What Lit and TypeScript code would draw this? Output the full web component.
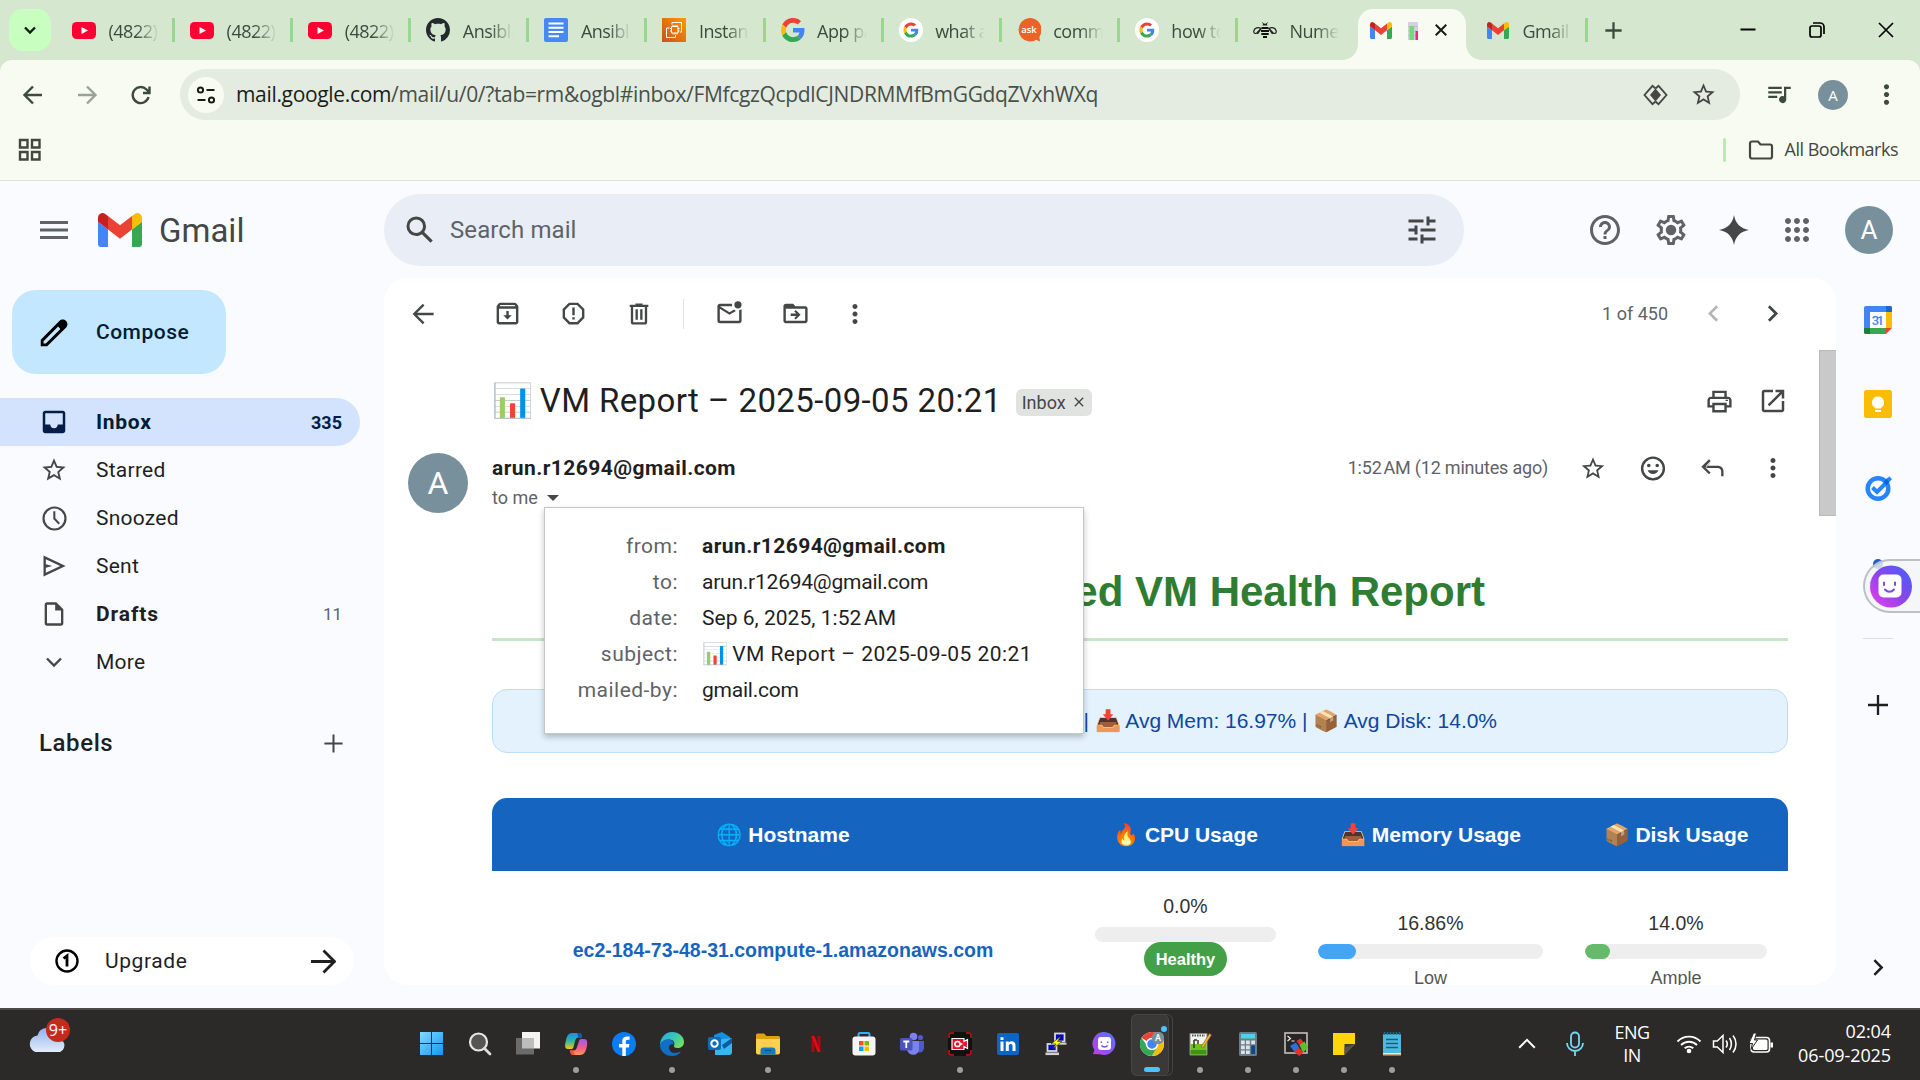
import { LitElement, html, svg, css, nothing, type TemplateResult, type SVGTemplateResult } from "lit";
import { customElement } from "lit/decorators.js";
import { classMap } from "lit/directives/class-map.js";

const BAR_CHART = "\u{1F4CA}";
const INBOX_TRAY = "\u{1F4E5}";
const PACKAGE = "\u{1F4E6}";
const FIRE = "\u{1F525}";
const GLOBE = "\u{1F310}";

/** Filled glyph on the 24-unit icon grid. */
const fill = (d: string, size = 30, cls = "") =>
  html`<svg class=${cls} width=${size} height=${size} viewBox="0 0 24 24" fill="currentColor"><path fill-rule="evenodd" d=${d} /></svg>`;

/** Outlined glyph on the 24-unit icon grid. */
const line = (d: string, size = 30, w = 2, cls = "") =>
  html`<svg class=${cls} width=${size} height=${size} viewBox="0 0 24 24" fill="none" stroke="currentColor" stroke-width=${w}><path d=${d} /></svg>`;

const art = (w: number, h: number, box: string, body: SVGTemplateResult) =>
  html`<svg width=${w} height=${h} viewBox=${box} preserveAspectRatio="none">${body}</svg>`;

const P = {
  star: "M22 9.24l-7.19-.62L12 2 9.19 8.63 2 9.24l5.46 4.73L5.82 21 12 17.27 18.18 21l-1.63-7.03L22 9.24zM12 15.4l-3.76 2.27 1-4.28-3.32-2.88 4.38-.38L12 6.1l1.71 4.04 4.38.38-3.32 2.88 1 4.28L12 15.4z",
  dots: "M12 8c1.1 0 2-.9 2-2s-.9-2-2-2-2 .9-2 2 .9 2 2 2zm0 2c-1.1 0-2 .9-2 2s.9 2 2 2 2-.9 2-2-.9-2-2-2zm0 6c-1.1 0-2 .9-2 2s.9 2 2 2 2-.9 2-2-.9-2-2-2z",
  search: "M20.49 19l-5.73-5.73C15.53 12.2 16 10.91 16 9.5A6.5 6.5 0 1 0 9.5 16c1.41 0 2.7-.47 3.77-1.24L19 20.49 20.49 19zM5 9.5C5 7.01 7.01 5 9.5 5S14 7.01 14 9.5 11.99 14 9.5 14 5 11.99 5 9.5z",
  tune: "M3 17v2h6v-2H3zM3 5v2h10V5H3zm10 16v-2h8v-2h-8v-2h-2v6h2zM7 9v2H3v2h4v2h2V9H7zm14 4v-2H11v2h10zm-6-4h2V7h4V5h-4V3h-2v6z",
  help: "M11 18h2v-2h-2v2zm1-16C6.48 2 2 6.48 2 12s4.48 10 10 10 10-4.48 10-10S17.52 2 12 2zm0 18c-4.41 0-8-3.59-8-8s3.59-8 8-8 8 3.59 8 8-3.59 8-8 8zm0-14c-2.21 0-4 1.79-4 4h2c0-1.1.9-2 2-2s2 .9 2 2c0 2-3 1.75-3 5h2c0-2.25 3-2.5 3-5 0-2.21-1.79-4-4-4z",
  gear: "M19.43 12.98c.04-.32.07-.64.07-.98 0-.34-.03-.66-.07-.98l2.11-1.65c.19-.15.24-.42.12-.64l-2-3.46c-.09-.16-.26-.25-.44-.25-.06 0-.12.01-.17.03l-2.49 1c-.52-.4-1.08-.73-1.69-.98l-.38-2.65C14.46 2.18 14.25 2 14 2h-4c-.25 0-.46.18-.49.42l-.38 2.65c-.61.25-1.17.59-1.69.98l-2.49-1c-.06-.02-.12-.03-.18-.03-.17 0-.34.09-.43.25l-2 3.46c-.13.22-.07.49.12.64l2.11 1.65c-.04.32-.07.65-.07.98 0 .33.03.66.07.98l-2.11 1.65c-.19.15-.24.42-.12.64l2 3.46c.09.16.26.25.44.25.06 0 .12-.01.17-.03l2.49-1c.52.4 1.08.73 1.69.98l.38 2.65c.03.24.24.42.49.42h4c.25 0 .46-.18.49-.42l.38-2.65c.61-.25 1.17-.59 1.69-.98l2.49 1c.06.02.12.03.18.03.17 0 .34-.09.43-.25l2-3.46c.12-.22.07-.49-.12-.64l-2.11-1.65zm-1.98-1.71c.04.31.05.52.05.73 0 .21-.02.43-.05.73l-.14 1.13.89.7 1.08.84-.7 1.21-1.27-.51-1.04-.42-.9.68c-.43.32-.84.56-1.25.73l-1.06.43-.16 1.13-.2 1.35h-1.4l-.19-1.35-.16-1.13-1.06-.43c-.43-.18-.83-.41-1.23-.71l-.91-.7-1.06.43-1.27.51-.7-1.21 1.08-.84.89-.7-.14-1.13c-.03-.31-.05-.54-.05-.74s.02-.43.05-.73l.14-1.13-.89-.7-1.08-.84.7-1.21 1.27.51 1.04.42.9-.68c.43-.32.84-.56 1.25-.73l1.06-.43.16-1.13.2-1.35h1.39l.19 1.35.16 1.13 1.06.43c.43.18.83.41 1.23.71l.91.7 1.06-.43 1.27-.51.7 1.21-1.07.85-.89.7.14 1.13zM12 8.5a3.5 3.5 0 1 0 0 7 3.5 3.5 0 0 0 0-7z",
  spark: "M12 2c.9 5.6 4.4 9.1 10 10-5.6.9-9.1 4.4-10 10-.9-5.6-4.4-9.1-10-10 5.6-.9 9.1-4.4 10-10z",
  apps: "M6 8c1.1 0 2-.9 2-2s-.9-2-2-2-2 .9-2 2 .9 2 2 2zm6 12c1.1 0 2-.9 2-2s-.9-2-2-2-2 .9-2 2 .9 2 2 2zm-6 0c1.1 0 2-.9 2-2s-.9-2-2-2-2 .9-2 2 .9 2 2 2zm0-6c1.1 0 2-.9 2-2s-.9-2-2-2-2 .9-2 2 .9 2 2 2zm6 0c1.1 0 2-.9 2-2s-.9-2-2-2-2 .9-2 2 .9 2 2 2zm4-8c0 1.1.9 2 2 2s2-.9 2-2-.9-2-2-2-2 .9-2 2zm-4 2c1.1 0 2-.9 2-2s-.9-2-2-2-2 .9-2 2 .9 2 2 2zm6 6c1.1 0 2-.9 2-2s-.9-2-2-2-2 .9-2 2 .9 2 2 2zm0 6c1.1 0 2-.9 2-2s-.9-2-2-2-2 .9-2 2 .9 2 2 2z",
  archive: "M20.54 5.23l-1.39-1.68C18.88 3.21 18.47 3 18 3H6c-.47 0-.88.21-1.16.55L3.46 5.23C3.17 5.57 3 6.02 3 6.5V19c0 1.1.9 2 2 2h14c1.1 0 2-.9 2-2V6.5c0-.48-.17-.93-.46-1.27zM6.24 5h11.52l.83 1H5.42l.82-1zM5 19V8h14v11H5zm8-9h-2v3.5H8.5L12 17l3.5-3.5H13V10z",
  spam: "M15.73 3H8.27L3 8.27v7.46L8.27 21h7.46L21 15.73V8.27L15.73 3zM19 14.9L14.9 19H9.1L5 14.9V9.1L9.1 5h5.8L19 9.1v5.8zM11 7h2v6.5h-2zM11 15h2v2h-2z",
  trash: "M15 4V3H9v1H4v2h1v13c0 1.1.9 2 2 2h10c1.1 0 2-.9 2-2V6h1V4h-5zm2 15H7V6h10v13zM9 8h2v9H9zM13 8h2v9h-2z",
  unread: "M22 8.5V18c0 1.1-.9 2-2 2H4c-1.1 0-2-.9-2-2V6c0-1.1.9-2 2-2h10.2c-.1.6-.1 1.3 0 2H4l8 5 3.8-2.4 1.5 1.3L12 13 4 8v10h16V9.2c.7-.1 1.4-.3 2-.7zM19 1.8a3 3 0 1 0 0 6 3 3 0 0 0 0-6z",
  move: "M20 6h-8l-2-2H4c-1.1 0-2 .9-2 2v12c0 1.1.9 2 2 2h16c1.1 0 2-.9 2-2V8c0-1.1-.9-2-2-2zm0 12H4V8h16v10zm-7.8-1l4-4-4-4-1.2 1.3L12.7 12H8v2h4.7L11 15.7z",
  print: "M19 8h-1V3H6v5H5c-1.66 0-3 1.34-3 3v6h4v4h12v-4h4v-6c0-1.66-1.34-3-3-3zM8 5h8v3H8V5zm8 14H8v-4h8v4zm2-4v-2H6v2H4v-4c0-.55.45-1 1-1h14c.55 0 1 .45 1 1v4h-2zM17 11.5h2v-1h-2z",
  openNew: "M19 19H5V5h7V3H5c-1.11 0-2 .9-2 2v14c0 1.1.89 2 2 2h14c1.1 0 2-.9 2-2v-7h-2v7zM14 3v2h3.59l-9.83 9.83 1.41 1.41L19 6.41V10h2V3h-7z",
  smile: "M12 2a10 10 0 1 0 0 20 10 10 0 0 0 0-20zm0 18a8 8 0 1 1 0-16 8 8 0 0 1 0 16zM8.5 8a1.5 1.5 0 1 0 0 3 1.5 1.5 0 0 0 0-3zM15.5 8a1.5 1.5 0 1 0 0 3 1.5 1.5 0 0 0 0-3zM7.5 13.5c.8 2 2.4 3 4.5 3s3.7-1 4.5-3z",
  reply: "M10 7L5.5 11.5 10 16 8.6 17.4 2 11l6.6-6.4L10 6 6 10h10c3 0 5 2 5 5v4h-2v-4c0-1.8-1.2-3-3-3H6z",
  inbox: "M19 3H5c-1.1 0-2 .9-2 2v14c0 1.1.9 2 2 2h14c1.1 0 2-.9 2-2V5c0-1.1-.9-2-2-2zm0 11h-4c0 1.66-1.34 3-3 3s-3-1.34-3-3H5V5h14v9z",
  clock: "M12 2a10 10 0 1 0 0 20 10 10 0 0 0 0-20zm0 18.2a8.2 8.2 0 1 1 0-16.4 8.2 8.2 0 0 1 0 16.4zM12.7 6H11v6.5l4.3 4.5 1.2-1.2-3.8-4z",
  sent: "M3 3v18l19-9L3 3zm2 3.2L17.3 12 5 17.8v-4.3l5.5-1.5L5 10.5z",
  draft: "M6 2c-1.1 0-2 .9-2 2v16c0 1.1.9 2 2 2h12c1.1 0 2-.9 2-2V8l-6-6H6zm12 18H6V4h7v5h5v11z",
  pencil: "M20.4 3.6c-1.5-1.5-3.6-1.2-4.7-.1L2 17.3V22h4.7L20.5 8.3c1.1-1.1 1.4-3.2-.1-4.7zM5.7 20H4v-1.7L14.6 7.7l1.7 1.7z",
  music: "M2 5h12v2H2zM2 9h12v2H2zM2 13h8v2H2zM16 5h6v2.2h-4V16.5a3.2 3.2 0 1 1-2-3z",
};

const gmailMark = (w: number, h: number) =>
  art(w, h, "52 42 88 66", svg`<path fill="#4285f4" d="M58 108h14V74L52 59v43c0 3.32 2.69 6 6 6"/><path fill="#34a853" d="M120 108h14c3.32 0 6-2.69 6-6V59l-20 15"/><path fill="#fbbc04" d="M120 48v26l20-15v-8c0-7.42-8.47-11.65-14.4-7.2"/><path fill="#ea4335" d="M72 74V48l24 18 24-18v26L96 92"/><path fill="#c5221f" d="M52 51v8l20 15V48l-5.6-4.2c-5.94-4.45-14.4-.22-14.4 7.2"/>`);

const googleG = svg`<path fill="#EA4335" d="M24 9.5c3.54 0 6.71 1.22 9.21 3.6l6.85-6.85C35.9 2.38 30.47 0 24 0 14.62 0 6.51 5.38 2.56 13.22l7.98 6.19C12.43 13.72 17.74 9.5 24 9.5z"/><path fill="#4285F4" d="M46.98 24.55c0-1.57-.15-3.09-.38-4.55H24v9.02h12.94c-.58 2.96-2.26 5.48-4.78 7.18l7.73 6c4.51-4.18 7.09-10.36 7.09-17.65z"/><path fill="#FBBC05" d="M10.53 28.59c-.48-1.45-.76-2.99-.76-4.59s.27-3.14.76-4.59l-7.98-6.19C.92 16.46 0 20.12 0 24c0 3.88.92 7.54 2.56 10.78l7.97-6.19z"/><path fill="#34A853" d="M24 48c6.48 0 11.93-2.13 15.89-5.81l-7.73-6c-2.15 1.45-4.92 2.3-8.16 2.3-6.26 0-11.57-4.22-13.47-9.91l-7.98 6.19C6.51 42.62 14.62 48 24 48z"/>`;

const favicons: Record<string, () => TemplateResult> = {
  youtube: () => art(24, 17, "0 0 24 17", svg`<rect width="24" height="17" rx="4.5" fill="#ff0033"/><path d="M9.5 5v7l6.5-3.5z" fill="#fff"/>`),
  github: () => art(24, 24, "0 0 16 16", svg`<path fill="#24292f" d="M8 0C3.58 0 0 3.58 0 8c0 3.54 2.29 6.53 5.47 7.59.4.07.55-.17.55-.38 0-.19-.01-.82-.01-1.49-2.01.37-2.53-.49-2.69-.94-.09-.23-.48-.94-.82-1.13-.28-.15-.68-.52-.01-.53.63-.01 1.08.58 1.23.82.72 1.21 1.87.87 2.33.66.07-.52.28-.87.51-1.07-1.78-.2-3.64-.89-3.64-3.95 0-.87.31-1.59.82-2.15-.08-.2-.36-1.02.08-2.12 0 0 .67-.21 2.2.82.64-.18 1.32-.27 2-.27.68 0 1.36.09 2 .27 1.53-1.04 2.2-.82 2.2-.82.44 1.1.16 1.92.08 2.12.51.56.82 1.27.82 2.15 0 3.07-1.87 3.75-3.65 3.95.29.25.54.73.54 1.48 0 1.07-.01 1.93-.01 2.2 0 .21.15.46.55.38A8.013 8.013 0 0 0 16 8c0-4.42-3.58-8-8-8z"/>`),
  docs: () => art(24, 24, "0 0 24 24", svg`<rect width="24" height="24" rx="2" fill="#4688f4"/><path d="M4.5 5.5h15M4.5 9.8h15M4.5 14h15M4.5 18.3h10.5" stroke="#fff" stroke-width="2"/>`),
  ec2: () => art(24, 24, "0 0 24 24", svg`<defs><linearGradient id="o" x1="0" y1="1" x2="1" y2="0"><stop stop-color="#c8511b"/><stop offset="1" stop-color="#f90"/></linearGradient></defs><rect width="24" height="24" fill="url(#o)"/><path d="M10 6.5V4.5h9.5v9.5H18M7.5 10H4.5v9.5h9v-2.5M9.5 8.5h6.5v6.5H9.5zM11 8.5V7M13 8.5V7M15 8.5V7M11 16.5V15M13 16.5V15M15 16.5V15M8 10.5h1.5M8 13h1.5M16 10.5h1.5M16 13h1.5" fill="none" stroke="#fff"/>`),
  google: () => art(24, 24, "0 0 48 48", googleG),
  googleRound: () => art(24, 24, "-14 -14 76 76", svg`<circle cx="24" cy="24" r="38" fill="#fff"/>${googleG}`),
  ask: () => art(24, 24, "0 0 24 24", svg`<path d="M12 0a11.5 11.8 0 1 1 0 23.5A11.5 11.8 0 0 1 12 0z" fill="#ea6427"/><path d="M15 20l8 3.5-1-8z" fill="#ea6427"/><text class="ask-text" x="12" y="15" text-anchor="middle" fill="#fff">ask</text>`),
  bee: () => art(24, 17, "0 0 24 17", svg`<path d="M8 6.500C5 4.500 1.500 6 .8 9c-.3 2.500 1.500 3 3 2zM16 6.500c3-2 6.500-.5 7.200 2.500.3 2.500-1.500 3-3 2zM8 7l-3.500 5M16 7l3.500 5" fill="none" stroke="#222" stroke-width="1.200"/><path d="M8.500 6h7M8 9h8M8.300 12h7.400M10 15h4" stroke="#111" stroke-width="1.800"/><path d="M9.500 3.500a2.500 2 0 0 1 5 0z" fill="#222"/><path d="M9.500.5l1.500 2M14.500.5L13 2.500" stroke="#222"/>`),
};

const baseStyles = css`
  :host, * { box-sizing: border-box; }
  svg { display: block; flex: none; }
`;

interface Tab { icon: string; title: string; }

const TABS: Tab[] = [
  { icon: "youtube", title: "(4822) YouTube" },
  { icon: "youtube", title: "(4822) YouTube" },
  { icon: "youtube", title: "(4822) YouTube" },
  { icon: "github", title: "Ansible" },
  { icon: "docs", title: "Ansible" },
  { icon: "ec2", title: "Instances" },
  { icon: "google", title: "App password" },
  { icon: "googleRound", title: "what are" },
  { icon: "ask", title: "command" },
  { icon: "googleRound", title: "how to" },
  { icon: "bee", title: "Numerology" },
];

@customElement("browser-frame")
export class BrowserFrame extends LitElement {
  static styles = [baseStyles, css`
    :host { display: block; font-family: "Open Sans", "Liberation Sans", sans-serif; }
    .strip { display: flex; align-items: center; height: 60px; padding-left: 9px; background: #d5e8cf; color: #3c4b3c; }
    .tab-search { display: grid; place-items: center; width: 42px; height: 42px; border-radius: 14px; background: #c8ffc0; color: #10200f; }
    .tabs { display: flex; margin-left: 6px; }
    .tab { display: flex; align-items: center; width: 118.1px; height: 24px; padding-left: 15px; border-right: 3px solid #98d692; }
    .tab.no-edge { border-color: transparent; width: 120px; }
    .favicon { display: grid; place-items: center; width: 24px; height: 24px; flex: none; }
    .title { width: 50px; margin-left: 12.5px; padding-top: 2px; overflow: hidden; white-space: nowrap; font-size: 18px; line-height: 24px; letter-spacing: -0.5px; -webkit-mask-image: linear-gradient(90deg, #000 55%, transparent); }
    .current { position: relative; display: flex; align-items: center; align-self: flex-end; width: 108px; height: 51px; padding: 0 18px 9px 12px; border-radius: 15px 15px 0 0; background: #f8fbf1; color: #1a1c18; }
    .current::before, .current::after { content: ""; position: absolute; bottom: 0; width: 15px; height: 15px; }
    .current::before { left: -15px; background: radial-gradient(circle at 0 0, transparent 14.5px, #f8fbf1 15px); }
    .current::after { right: -15px; background: radial-gradient(circle at 100% 0, transparent 14.5px, #f8fbf1 15px); }
    .clip { margin: 1px 16px 0 16px; }
    .last { width: 122px; padding-left: 20px; }
    .new-tab { margin-left: 14px; }
    .window { display: flex; margin-left: auto; padding-right: 26px; color: #000; gap: 53px; align-items: center; }
    .chrome { border-bottom: 1px solid #dfe4d6; height: 121px; border-radius: 12px 12px 0 0; background: #f8fbf1; color: #434842; }
    .backing { background: #d5e8cf; }
    .bar { display: flex; align-items: center; height: 69px; color: #3c4b3c; }
    .nav { display: flex; width: 180px; padding-left: 21px; gap: 30px; flex: none; }
    .dim { opacity: .5; }
    .address { display: flex; align-items: center; width: 1560px; height: 51px; border-radius: 26px; padding: 0 23px 0 8px; background: #e4ebe0; color: #434842; }
    .site { display: grid; place-items: center; width: 36px; height: 36px; border-radius: 50%; background: #f8fbf1; color: #1a1c18; }
    .url { margin-left: 12px; font-size: 21px; letter-spacing: -.33px; color: #47504a; line-height: 30px; padding-bottom: 1px; }
    .host { color: #191d17; }
    .lens { margin-left: auto; }
    .mark { margin-left: 22px; }
    .me { display: grid; place-items: center; width: 30px; height: 30px; border-radius: 50%; background: #78909c; color: #fff; font-size: 15px; margin: 0 23px 0 25px; }
    .queue { margin-left: 26px; }
    .bookmarks { display: flex; align-items: center; height: 42px; padding: 0 22px 0 18px; font-size: 18px; letter-spacing: -.5px; color: #43483f; }
    .edge { width: 3px; height: 24px; border-radius: 2px; background: #b5efac; margin: 0 22px 0 auto; }
    .all { margin-left: 11px; padding-bottom: 2px; }
    .ask-text { font: 600 9.5px "Open Sans", sans-serif; }
  `];

  render() {
    return html`
      <div class="strip">
        <div class="tab-search">${line("M7 9.5l5 5 5-5", 24, 2.4)}</div>
        <div class="tabs">
          ${TABS.map((t, i) => html`<div class=${classMap({ tab: true, "no-edge": i === TABS.length - 1 })}>
            <span class="favicon">${favicons[t.icon]()}</span><span class="title">${t.title}</span></div>`)}
        </div>
        <div class="current">${gmailMark(22, 17)}
          <span class="clip">${art(10, 18, "0 0 10 18", svg`<path d="M0 0h10v18H0z" fill="#d6d0e2"/><path d="M0 4.5h10M0 9h10M0 13.5h10" stroke="#c3bbd4"/><rect x="1.5" y="4" width="4.5" height="14" fill="#6ee06a"/><rect x="7.5" y="9" width="2.5" height="9" fill="#f0287a"/>`)}</span>
          ${line("M3 3l18 18M21 3L3 21", 14, 3.5)}</div>
        <div class="tab last"><span class="favicon">${gmailMark(22, 17)}</span><span class="title">Gmail</span></div>
        <div class="new-tab">${line("M12 3.5v17M3.5 12h17", 23, 2.4)}</div>
        <div class="window">
          ${art(16, 16, "0 0 16 16", svg`<path d="M.5 7.5h15" stroke="#000" stroke-width="2"/>`)}
          ${art(16, 16, "0 0 16 16", svg`<rect x="1" y="4" width="11" height="11" rx="2" fill="none" stroke="#000" stroke-width="1.7"/><path d="M4 1h7a4 4 0 0 1 4 4v7" fill="none" stroke="#000" stroke-width="1.7"/>`)}
          ${art(16, 16, "0 0 16 16", svg`<path d="M1 1l14 14M15 1L1 15" stroke="#000" stroke-width="1.7"/>`)}
        </div>
      </div>
      <div class="backing"><div class="chrome">
        <div class="bar">
          <div class="nav">
            ${line("M21 12H4M12 3.5L3.5 12l8.5 8.5", 24, 2.4)}
            ${line("M3 12h17M12 3.5l8.5 8.5-8.5 8.5", 24, 2.4, "dim")}
            ${line("M19.5 14a8 8 0 1 1-2-7.5l2.5 2.5M20.5 3.5v6.5h-6.5", 24, 2.4)}
          </div>
          <div class="address">
            <span class="site">${art(20, 20, "0 0 20 20", svg`<g fill="none" stroke="currentColor" stroke-width="2"><circle cx="4.5" cy="5" r="2.6"/><path d="M10.5 5h8M1.5 15h8"/><circle cx="15.5" cy="15" r="2.6"/></g>`)}</span>
            <span class="url"><span class="host">mail.google.com</span>/mail/u/0/?tab=rm&amp;ogbl#inbox/FMfcgzQcpdlCJNDRMMfBmGGdqZVxhWXq</span>
            <span class="lens">${art(25, 22, "0 0 25 22", svg`<path d="M12.5 4.5L9.5 1.8 1.5 11l8 9.2 3-2.7M12.5 4.5l3-2.7L23.5 11l-8 9.2-3-2.7" fill="none" stroke="currentColor" stroke-width="1.8"/><path d="M12.5 4.5l5.5 6.5-5.5 6.5L7 11z" fill="currentColor"/>`)}</span>
            <span class="mark">${fill(P.star, 27)}</span>
          </div>
          <span class="queue">${fill(P.music, 27)}</span>
          <span class="me">A</span>
          ${fill(P.dots, 31)}
        </div>
        <div class="bookmarks">
          ${art(24, 24, "0 0 24 24", svg`<path d="M2 2h7.5v7.5H2zM14 2h7.5v7.5H14zM2 14h7.5v7.5H2zM14 14h7.5v7.5H14z" fill="none" stroke="currentColor" stroke-width="2.4"/>`)}
          <span class="edge"></span>
          ${art(26, 20, "0 0 26 20", svg`<path d="M2 3.5A2 2 0 0 1 4 1.5h6l2.5 3H22a2 2 0 0 1 2 2v10a2 2 0 0 1-2 2H4a2 2 0 0 1-2-2z" fill="none" stroke="currentColor" stroke-width="2.2"/>`)}
          <span class="all">All Bookmarks</span>
        </div>
      </div></div>`;
  }
}

@customElement("gmail-header")
export class GmailHeader extends LitElement {
  static styles = [baseStyles, css`
    :host { display: flex; align-items: center; height: 97px; padding-top: 1px; font-family: Roboto, sans-serif; color: #5f6368; }
    .brand { display: flex; align-items: center; width: 384px; padding-left: 40px; }
    .brand svg:first-child { margin-right: 30px; }
    .name { margin-left: 17px; font-size: 33px; line-height: 40px; color: #444746; padding-top: 2px; }
    .search { display: flex; align-items: center; width: 1080px; height: 72px; padding: 0 24px 0 18px; border-radius: 36px; background: #e9eef6; color: #444746; }
    .hint { margin-left: 12px; font-size: 24px; letter-spacing: .1px; color: #5f6368; }
    .search svg:last-child { margin-left: auto; }
    .tools { display: flex; align-items: center; margin-left: 108px; }
    .slot { display: grid; place-items: center; width: 66px; }
    .spark { width: 60px; color: #444746; }
    .avatar { display: grid; place-items: center; width: 48px; height: 48px; margin-left: 15px; border-radius: 50%; background: #78909c; color: #fff; font-size: 26px; }
  `];
  render() {
    return html`
      <div class="brand">
        ${art(28, 18, "0 0 28 18", svg`<path d="M0 1.5h28M0 9h28M0 16.5h28" stroke="#5f6368" stroke-width="3"/>`)}
        ${gmailMark(44, 34)}<span class="name">Gmail</span>
      </div>
      <div class="search">${fill(P.search, 36)}<span class="hint">Search mail</span>${fill(P.tune, 36)}</div>
      <div class="tools">
        <span class="slot">${fill(P.help, 36)}</span>
        <span class="slot">${fill(P.gear, 36)}</span>
        <span class="slot spark">${fill(P.spark, 36)}</span>
        <span class="slot">${fill(P.apps, 36)}</span>
        <span class="avatar">A</span>
      </div>`;
  }
}

interface Folder { icon: TemplateResult; label: string; count?: string; active?: boolean; bold?: boolean; }

const FOLDERS: Folder[] = [
  { icon: fill(P.inbox, 30), label: "Inbox", count: "335", active: true },
  { icon: fill(P.star, 28), label: "Starred" },
  { icon: fill(P.clock, 29), label: "Snoozed" },
  { icon: fill(P.sent, 28), label: "Sent" },
  { icon: fill(P.draft, 28), label: "Drafts", count: "11", bold: true },
  { icon: line("M6 9l6 6 6-6", 28, 2), label: "More" },
];

@customElement("gmail-sidebar")
export class GmailSidebar extends LitElement {
  static styles = [baseStyles, css`
    :host { display: flex; flex-direction: column; width: 384px; padding-top: 12px; font-family: Roboto, sans-serif; font-size: 21px; letter-spacing: .25px; color: #1f1f1f; }
    .compose { display: flex; align-items: center; width: 214px; height: 84px; margin-left: 12px; padding-left: 26px; gap: 25px; border-radius: 24px; background: #c2e7ff; color: #001d35; font-weight: 500; letter-spacing: .5px; }
    .compose svg { color: #000; }
    .folders { margin-top: 24px; }
    .folder { display: flex; align-items: center; width: 360px; height: 48px; padding: 0 18px 0 39px; border-radius: 0 24px 24px 0; color: #1f1f1f; }
    .glyph { display: grid; place-items: center; width: 30px; color: #444746; }
    .label { margin-left: 27px; }
    .count { margin-left: auto; font-size: 17px; color: #5f6368; letter-spacing: 0; }
    .active { background: #d3e3fd; color: #001d35; font-weight: 700; letter-spacing: .7px; }
    .active .glyph, .active .count { color: #041e49; }
    .active .count { font-size: 18px; }
    .bold .label { font-weight: 700; letter-spacing: .9px; }
    .labels { display: flex; align-items: center; justify-content: space-between; height: 48px; margin-top: 33px; padding: 0 39px 0 39px; font-size: 24px; font-weight: 500; letter-spacing: .6px; }
    .labels svg { color: #444746; }
    .upgrade { display: flex; align-items: center; width: 324px; height: 48px; margin: 170px 0 0 30px; padding: 0 18px 0 25px; border-radius: 24px; background: #fff; letter-spacing: .6px; }
    .upgrade span { margin: 0 auto 0 26px; }
  `];
  render() {
    return html`
      <div class="compose">${fill(P.pencil, 33)}<span>Compose</span></div>
      <div class="folders">
        ${FOLDERS.map((f) => html`<div class=${classMap({ folder: true, active: !!f.active, bold: !!f.bold })}>
          <span class="glyph">${f.icon}</span><span class="label">${f.label}</span>
          ${f.count ? html`<span class="count">${f.count}</span>` : nothing}</div>`)}
      </div>
      <div class="labels"><span>Labels</span>${line("M12 2.5v19M2.5 12h19", 23, 2.1)}</div>
      <div class="upgrade">
        ${art(24, 24, "0 0 24 24", svg`<circle cx="12" cy="12" r="10.5" fill="none" stroke="#000" stroke-width="2.4"/><path d="M8.5 9.5l3.5-2.7V17.5" fill="none" stroke="#000" stroke-width="2.8"/>`)}
        <span>Upgrade</span>${line("M0 12h22M12 1.5L22.5 12 12 22.5", 25, 2.7)}
      </div>`;
  }
}

interface Metric { value: string; percent: number; note: string; kind: "cpu" | "mem" | "disk"; badge?: boolean; }

const METRICS: Metric[] = [
  { value: "0.0%", percent: 0, note: "Healthy", kind: "cpu", badge: true },
  { value: "16.86%", percent: 16.86, note: "Low", kind: "mem" },
  { value: "14.0%", percent: 14, note: "Ample", kind: "disk" },
];

@customElement("mail-view")
export class MailView extends LitElement {
  static styles = [baseStyles, css`
    :host { position: relative; display: flex; flex-direction: column; width: 1452px; height: 707px; overflow: hidden; border-radius: 24px; background: #fff; font-family: Roboto, sans-serif; color: #1f1f1f; }
    svg { color: #444746; }
    .tools { display: flex; align-items: center; height: 71px; margin-bottom: 1px; flex: none; padding: 0 49px 0 24px; }
    .slot { display: grid; place-items: center; width: 66px; }
    .tools > svg:first-child { margin-right: 36px; }
    .rule { width: 1px; height: 30px; margin: 0 12px 0 11px; background: #dfe1e3; }
    .narrow { width: 54px; }
    .page { margin-left: auto; font-size: 18px; color: #5f6368; }
    .faint { opacity: .4; }
    .pager { display: flex; gap: 30px; margin-left: 31px; }
    .subject { display: flex; align-items: center; height: 64px; flex: none; margin-top: 19px; padding: 0 48px 0 108px; }
    .subject h2 { margin: 0; font-size: 33px; font-weight: 400; line-height: 44px; letter-spacing: .39px; white-space: pre; }
    .emoji-lg { letter-spacing: -1.8px; }
    .chip { display: flex; align-items: center; gap: 8px; height: 27px; width: 76px; margin: 2px auto 0 14px; padding: 0 7px 0 6px; border-radius: 6px; background: #e1e3e1; color: #444746; font-size: 18px; }
    .subject .gap { width: 24px; }
    .sender { display: flex; height: 60px; flex: none; margin-top: 20px; padding: 0 48px 0 24px; line-height: 30px; font-size: 18px; color: #5f6368; }
    .avatar { display: grid; place-items: center; width: 60px; height: 60px; border-radius: 50%; background: #78909c; color: #fff; font-size: 32px; }
    .who { margin-left: 24px; }
    .from { color: #1f1f1f; font-size: 21px; font-weight: 700; letter-spacing: .43px; }
    .to { display: flex; align-items: center; gap: 9px; }
    .actions { display: flex; align-items: center; height: 30px; margin-left: auto; letter-spacing: -.21px; }
    .actions svg { width: 30px; margin-left: 30px; }
    .mail { width: 1296px; margin: 31px 0 0 108px; font-family: "Liberation Sans", Arial, sans-serif; white-space: nowrap; }
    .mail h1 { margin: 0; height: 97px; padding-right: 303px; border-bottom: 3px solid #c8e6c9; text-align: right; font-size: 42px; line-height: 95px; color: #2e7d32; }
    .summary { height: 64px; margin-top: 48px; padding-right: 290px; border: 1.5px solid #bbdefb; border-radius: 15px; background: #e3f2fd; color: #0d47a1; font-size: 21px; line-height: 62px; letter-spacing: -.03px; text-align: right; }
    .grid { display: grid; grid-template-columns: 582px 223px 267px 224px; }
    .head { height: 73px; margin-top: 45px; border-radius: 15px 15px 0 0; background: #1565c0; color: #fff; font-size: 21px; font-weight: 700; line-height: 73px; letter-spacing: -.03px; text-align: center; }
    .row { height: 158px; font-size: 19.5px; text-align: center; color: #333; }
    .host { line-height: 158px; font-weight: 700; color: #1565c0; }
    .metric { display: flex; flex-direction: column; align-items: center; padding: 37px 21px 0; line-height: 30px; }
    .metric.cpu { padding-top: 20px; }
    .track { align-self: stretch; height: 15px; margin-top: 6px; border-radius: 8px; background: #eee; overflow: hidden; }
    .level { height: 15px; border-radius: 8px; }
    .mem .level { background: #42a5f5; }
    .disk .level { background: #66bb6a; }
    .note { margin-top: 5px; font-size: 18px; line-height: 28px; color: #555; }
    .badge { height: 34px; padding: 0 12px; border-radius: 17px; background: #43a047; color: #fff; font-size: 16.5px; font-weight: 700; line-height: 34px; }
    .thumb { position: absolute; right: 0; top: 72px; width: 17px; height: 166px; background: #c9c9c9; border: 1px solid #b9b9b9; border-right: 0; }
    .details { position: absolute; left: 160px; top: 229px; width: 540px; height: 227px; padding: 20px 0 0 24px; display: grid; grid-template-columns: 109px 1fr; grid-auto-rows: 36px; column-gap: 24px; border: 1px solid #c4c7c5; background: #fff; box-shadow: 0 3px 6px rgba(0, 0, 0, .24); font-size: 21px; line-height: 36px; white-space: nowrap; }
    .key { text-align: right; color: #5f6368; letter-spacing: .48px; }
    .value { letter-spacing: .03px; }
    .strong { font-weight: 700; letter-spacing: .42px; }
    .plain { letter-spacing: -.23px; }
    .wide { letter-spacing: .46px; }
    .emoji-sm { letter-spacing: -1.5px; }
  `];

  private metric(m: Metric) {
    return html`<div class=${classMap({ metric: true, [m.kind]: true })}>
      <span>${m.value}</span>
      <div class="track"><div class="level" style="width:${m.percent}%"></div></div>
      <span class=${m.badge ? "badge" : "note"}>${m.note}</span>
    </div>`;
  }

  render() {
    return html`
      <div class="tools">
        ${line("M20.5 12H5.5M12.5 4.5L5 12l7.5 7.5", 30, 1.9)}
        <span class="slot">${fill(P.archive, 29)}</span>
        <span class="slot">${fill(P.spam, 29)}</span>
        <span class="slot">${fill(P.trash, 28)}</span>
        <span class="rule"></span>
        <span class="slot">${fill(P.unread, 29)}</span>
        <span class="slot">${fill(P.move, 29)}</span>
        <span class="slot narrow">${fill(P.dots, 30)}</span>
        <span class="page">1 of 450</span>
        <span class="pager">${line("M15 6l-6 6 6 6", 29, 2.1, "faint")}${line("M9 6l6 6-6 6", 29, 2.3)}</span>
      </div>
      <div class="subject">
        <h2><span class="emoji-lg">${BAR_CHART}</span> VM Report – 2025-09-05 20:21</h2>
        <span class="chip">Inbox${line("M2 2l20 20M22 2L2 22", 10, 3.2)}</span>
        ${fill(P.print, 29)}<span class="gap"></span>${fill(P.openNew, 30)}
      </div>
      <div class="sender">
        <span class="avatar">A</span>
        <div class="who">
          <div class="from">arun.r12694@gmail.com</div>
          <div class="to">to me ${art(12, 6, "0 0 12 6", svg`<path d="M0 0h12L6 6z" fill="#444746"/>`)}</div>
        </div>
        <div class="actions">
          <span>1:52\u202fAM (12 minutes ago)</span>
          ${fill(P.star, 27)}${fill(P.smile, 29)}${fill(P.reply, 28)}${fill(P.dots, 30)}
        </div>
      </div>
      <div class="mail">
        <h1>Automated VM Health Report</h1>
        <div class="summary">${FIRE} Avg CPU: 0.0% | ${INBOX_TRAY} Avg Mem: 16.97% | ${PACKAGE} Avg Disk: 14.0%</div>
        <div class="grid head">
          <span>${GLOBE} Hostname</span><span>${FIRE} CPU Usage</span><span>${INBOX_TRAY} Memory Usage</span><span>${PACKAGE} Disk Usage</span>
        </div>
        <div class="grid row">
          <span class="host">ec2-184-73-48-31.compute-1.amazonaws.com</span>
          ${METRICS.map((m) => this.metric(m))}
        </div>
      </div>
      <div class="thumb"></div>
      <div class="details">
        <span class="key">from:</span><span class="strong">arun.r12694@gmail.com</span>
        <span class="key">to:</span><span class="plain">arun.r12694@gmail.com</span>
        <span class="key">date:</span><span class="value">Sep 6, 2025, 1:52\u202fAM</span>
        <span class="key">subject:</span><span class="wide"><span class="emoji-sm">${BAR_CHART}</span> VM Report – 2025-09-05 20:21</span>
        <span class="key">mailed-by:</span><span class="plain">gmail.com</span>
      </div>`;
  }
}

@customElement("side-rail")
export class SideRail extends LitElement {
  static styles = [baseStyles, css`
    :host { position: relative; display: flex; flex-direction: column; align-items: center; width: 84px; padding-top: 28px; gap: 56px; color: #1f1f1f; }
    .cal { font: 500 13px Roboto, sans-serif; }
    .rule { width: 30px; height: 1px; margin-top: -4px; background: #dadce0; }
    .next { margin: 184px 1px 0 0; }
    .bubble { position: absolute; right: 0; top: 281px; width: 57px; height: 54px; padding: 4px; border: 2px solid #bdbfc2; border-right: 0; border-radius: 27px 0 0 27px; background: rgba(243, 244, 246, .82); }
  `];
  render() {
    return html`
      ${art(28, 28, "0 0 28 28", svg`<rect width="28" height="28" rx="2" fill="#4285f4"/><path d="M22 0h4a2 2 0 0 1 2 2v4h-6z" fill="#1967d2"/><path d="M22 6h6v16h-6z" fill="#fbbc04"/><path d="M6 22h16v6H6z" fill="#34a853"/><path d="M22 22h6v6h-6z" fill="#f9fbff"/><path d="M0 22h6v6H2a2 2 0 0 1-2-2z" fill="#188038"/><path d="M22 22h6l-6 6z" fill="#ea4335"/><path d="M6 6h16v16H6z" fill="#fff"/><text class="cal" x="14" y="18.7" text-anchor="middle" fill="#4285f4" textLength="12.5">31</text>`)}
      ${art(28, 28, "0 0 28 28", svg`<rect width="28" height="28" rx="2.5" fill="#fbbc04"/><path d="M14 6.5a6 6 0 0 1 3 11.2v.8h-6v-.8a6 6 0 0 1 3-11.2zM11 20h6v2h-6z" fill="#fff"/>`)}
      ${art(28, 28, "0 0 28 28", svg`<circle cx="14" cy="14.5" r="10.3" fill="none" stroke="#2684fc" stroke-width="4.5"/><path d="M8.5 13.5l4.5 4.5L22 9" fill="none" stroke="#2684fc" stroke-width="4"/><path d="M20.5 6l5-3.5L28 5.3l-5.5 5.5z" fill="#2684fc"/><path d="M19.5 8l3-3 3 3-3 3.2z" fill="#0066da"/>`)}
      ${art(28, 28, "0 0 28 28", svg`<circle cx="14" cy="6" r="5" fill="#1a5fd0"/><path d="M5 26c0-7 18-7 18 0z" fill="#4285f4"/>`)}
      <span class="rule"></span>
      ${art(20, 20, "0 0 20 20", svg`<path d="M10 0v20M0 10h20" stroke="#1f1f1f" stroke-width="2.3"/>`)}
      <span class="next">${line("M9 5l7 7-7 7", 25, 2.4)}</span>
      <div class="bubble">${art(44, 43, "0 0 44 43", svg`<defs><linearGradient id="b" x1="0" y1="1" x2="1" y2="0"><stop offset=".05" stop-color="#e63df0"/><stop offset=".5" stop-color="#8a45e8"/><stop offset="1" stop-color="#3f63ff"/></linearGradient></defs><circle cx="22" cy="21.5" r="21" fill="url(#b)"/><rect x="9.5" y="9.5" width="23" height="23" rx="5" fill="#fff"/><path d="M15 17.5v2.5M26 17.5v2.5M16 24.500c2.500 3 6.500 3 9 0" fill="none" stroke="#7a4be8" stroke-width="2" stroke-linecap="round"/>`)}</div>`;
  }
}

interface TaskApp { art: SVGTemplateResult; running?: boolean; active?: boolean; }

const APPS: TaskApp[] = [
  { art: svg`<defs><linearGradient id="w" x1="0" y1="0" x2="1" y2="1"><stop stop-color="#7fdcff"/><stop offset="1" stop-color="#1296f5"/></linearGradient></defs><path d="M0 0h11v11H0zM12 0h11v11H12zM0 12h11v11H0zM12 12h11v11H12z" fill="url(#w)"/>` },
  { art: svg`<circle cx="10.5" cy="10" r="8.5" fill="#555" stroke="#e8e8e8" stroke-width="2.2"/><path d="M16.5 16.5L22 22" stroke="#ddd" stroke-width="2.8" stroke-linecap="round"/>` },
  { art: svg`<rect x="6" y="0" width="18" height="16.5" fill="#f4f4f4"/><rect x="0" y="6" width="18" height="16.5" fill="#6b6b6b"/><rect x="6" y="6" width="12" height="10.5" fill="#bdbdbd"/>` },
  { art: svg`<defs><linearGradient id="c1" x1="0" y1="0" x2="0" y2="1"><stop stop-color="#1e8df0"/><stop offset=".5" stop-color="#2fb6a0"/><stop offset="1" stop-color="#f5c518"/></linearGradient><linearGradient id="c2" x1="0" y1="0" x2="0" y2="1"><stop stop-color="#a458ee"/><stop offset=".6" stop-color="#f0608a"/><stop offset="1" stop-color="#ff9a4a"/></linearGradient></defs><path d="M8 1h7c2.5 0 2.5 2 3 4.5h-3.5c-2 0-2.8 1.5-3.5 4L9.500 15c-.5 1.500-1 2-2.500 2H4c-4 0-3-4.500-2-9 1-4 2.500-7 6-7z" fill="url(#c1)"/><path d="M16 23H9.500c-2.500 0-3-2-3.500-4.500h3c2.500 0 3.300-1 4-3.500L15 9c.5-1.500 1-2 2.500-2H20c4 0 3.500 4.500 2.500 9-1 4-2.500 7-6.500 7z" fill="url(#c2)"/><path d="M13 1h2c2.500 0 2.500 2 3 4.500h-3.500z" fill="#1b4fc4"/><path d="M6 18.500h3l2 4.500H9.500C7 23 6.500 21 6 18.500z" fill="#f0582c"/>`, running: true },
  { art: svg`<circle cx="12" cy="12" r="12" fill="#0a7cf5"/><path d="M13.800 24v-8.500h3l.6-3.500h-3.600V9.800c0-1.200.5-2 2.100-2h1.700V4.600c-3.900-.7-7.300.1-7.300 4.600V12H7v3.500h3.300V24z" fill="#fff"/>` },
  { art: svg`<defs><linearGradient id="e1" x1="0" y1="0" x2="1" y2=".6"><stop stop-color="#2aa5e8"/><stop offset=".6" stop-color="#38c8b8"/><stop offset="1" stop-color="#6fe05a"/></linearGradient></defs><path d="M12 0c7 0 12 4.500 12 10 0 4-3 6-6.500 6-3 0-4-1-3.500-2.500 1.500-3-1-6-4.500-6C5 7.500 1 10 0 13.500 0 6 5 0 12 0z" fill="url(#e1)"/><path d="M0 13c1-4 5-6 9-5.500 3 .3 5 2.500 4.500 5-3-1-5 1-4.500 4 .6 3.500 5 6 10 3.500l2-.5c-2 3-5.500 4.500-9 4.500C5 24 0 19 0 13z" fill="#0f6fc5"/>`, running: true },
  { art: svg`<path d="M6 3l8-3 8 5v6H6z" fill="#1490df"/><path d="M7 8l17-2v14a3 3 0 0 1-3 3H7z" fill="#35b8f1"/><path d="M14 13l10-7v5l-8 6z" fill="#0c59a4"/><rect x="0" y="5" width="13" height="13" rx="2" fill="#0f6cbd"/><circle cx="6.5" cy="11.5" r="3.2" fill="none" stroke="#fff" stroke-width="2"/>` },
  { art: svg`<path d="M0 3a1.500 1.500 0 0 1 1.500-1.500H8L10.500 4H22.500A1.500 1.500 0 0 1 24 5.500V10H0z" fill="#e0a012"/><path d="M0 7h24v13.500a2 2 0 0 1-2 2H2a2 2 0 0 1-2-2z" fill="#ffd04d"/><path d="M4.500 22.500v-4a3 3 0 0 1 3-3h9a3 3 0 0 1 3 3v4z" fill="#1477c9"/><path d="M9 18.500h6" stroke="#0b4f8c" stroke-width="1.3"/>`, running: true },
  { art: svg`<path d="M7.500 4h3v16c-1 0-2 .1-3 .3z" fill="#b1060f"/><path d="M13.500 4h3v16.300c-1-.2-2-.3-3-.3z" fill="#b1060f"/><path d="M7.500 4h3l6 16.300c-1-.2-2-.3-3-.3z" fill="#e50914"/>` },
  { art: svg`<path d="M6.500 5V2.500A1.500 1.500 0 0 1 8 1h8a1.500 1.500 0 0 1 1.500 1.500V5" fill="none" stroke="#2fb4f2" stroke-width="2"/><rect x=".5" y="4.5" width="23" height="19" rx="3" fill="#f5f5f5"/><path d="M7 9h4.500v4.500H7z" fill="#f25022"/><path d="M12.500 9H17v4.500h-4.500z" fill="#7fba00"/><path d="M7 14.500h4.500V19H7z" fill="#00a4ef"/><path d="M12.500 14.500H17V19h-4.500z" fill="#ffb900"/>` },
  { art: svg`<circle cx="13.5" cy="4.5" r="3.8" fill="#7b83eb"/><circle cx="20.5" cy="5.5" r="2.6" fill="#5059c9"/><path d="M15 9h9v7c0 5-6 6-9 2z" fill="#5059c9"/><path d="M7 9h12v8c0 7-10 8-12 1z" fill="#7b83eb"/><rect x="0" y="6" width="12.5" height="12.5" rx="1.5" fill="#4b53bc"/><path d="M3.300 9.500h6M6.300 9.500v6.500" stroke="#fff" stroke-width="1.8"/>` },
  { art: svg`<rect width="24" height="24" rx="3" fill="#111"/><path d="M1 6V3a2 2 0 0 1 2-2h3M18 1h3a2 2 0 0 1 2 2v3M23 18v3a2 2 0 0 1-2 2h-3M6 23H3a2 2 0 0 1-2-2v-3" fill="none" stroke="#c11" stroke-width="1.5"/><path d="M4 6.500h12v3l3.500-2v9l-3.500-2v3H4z" fill="#e8112d" stroke="#fff" stroke-width="1.2"/><circle cx="9.5" cy="12" r="2.6" fill="none" stroke="#fff" stroke-width="1.5"/><path d="M12 12h2.500" stroke="#fff" stroke-width="1.5"/>`, running: true },
  { art: svg`<rect x="1" y="1" width="22" height="22" rx="2" fill="#0a66c2"/><path d="M4.500 9.500h3V19h-3zM4.500 5.200h3v2.800h-3zM9.800 9.500h2.900v1.300c1.500-2.300 6.800-2.200 6.800 2.700V19h-3v-5c0-2.700-3.700-2.500-3.700 0v5h-3z" fill="#fff"/>` },
  { art: svg`<rect x="11" y="1.5" width="9.5" height="8" fill="#0000d0" stroke="#d8d8d8" stroke-width="1.8"/><path d="M11 11.700h11.500" stroke="#d0d0d0" stroke-width="2"/><rect x="3.5" y="12" width="9" height="7" fill="#0000d0" stroke="#d8d8d8" stroke-width="1.8"/><path d="M1.500 21.800h13.500" stroke="#d0d0d0" stroke-width="2.6"/><path d="M17 4L7 12h5l-3.500 5L18 9.500h-4.500z" fill="#ff0" stroke="#222" stroke-width=".6"/>` },
  { art: svg`<defs><linearGradient id="m" x1="0" y1="1" x2="1" y2="0"><stop stop-color="#c13df0"/><stop offset=".5" stop-color="#8a55f0"/><stop offset="1" stop-color="#4f7bff"/></linearGradient></defs><path d="M12.500 0A11.500 11.500 0 1 1 8 22.300L1 22l1.500-4A11.500 11.500 0 0 1 12.500 0z" fill="url(#m)"/><rect x="6" y="5" width="13" height="13" rx="3" fill="#fff"/><path d="M9.300 9.500v1.500M15.700 9.500v1.500M9.500 13.500c1.500 2 4.500 2 6 0" fill="none" stroke="#7a4be8" stroke-width="1.5"/>` },
  { art: svg`<circle cx="12" cy="12" r="12" fill="#fff"/><path d="M12 12L1.600 6A12 12 0 0 1 22.400 6H12z" fill="#ea4335"/><path d="M12 6.500h10.600A12 12 0 0 1 12 24l5-9z" fill="#fbbc04"/><path d="M1.600 6A12 12 0 0 0 12 24l5-9-8.500.5z" fill="#34a853"/><circle cx="12" cy="12" r="5.5" fill="#4285f4" stroke="#fff" stroke-width="1.5"/><circle cx="18" cy="6" r="6.2" fill="#78909c"/><text class="profile" x="18" y="9.2" text-anchor="middle" fill="#fff">A</text>`, active: true },
  { art: svg`<path d="M2 1.500h17V23H2z" fill="#f2f4ee" stroke="#888" stroke-width="1"/><path d="M2.500 12h16v10.500h-16z" fill="#6ec21f"/><path d="M2.500 18h16v4.500h-16z" fill="#3f9413"/><path d="M4 3.500h13" stroke="#555" stroke-width="2" stroke-dasharray="1.5 1"/><path d="M6 8v8M6 8h3M10 8v4" stroke="#333" stroke-width="1.5"/><path d="M13 15L21.500 1.500l2 1.500L15 16z" fill="#f5b52a" stroke="#855" stroke-width=".6"/>`, running: true },
  { art: svg`<rect x="3" y="0" width="18" height="24" rx="1.5" fill="#6e7b88"/><rect x="5" y="2" width="14" height="4.5" fill="#4fd0ee"/><path d="M5 8.500h3.800v3.800H5zM10 8.500h3.800v3.800H10zM15.200 8.500H19v3.800h-3.800zM5 13.500h3.800v3.800H5zM10 13.500h3.800v3.800H10zM5 18.500h3.800v3.500H5zM10 18.500h3.800v3.500H10z" fill="#dde3e8"/><path d="M15.200 13.500H19V22h-3.800z" fill="#0c4a86"/>`, running: true },
  { art: svg`<rect x="1" y="1" width="22" height="20" fill="#262626" stroke="#c0c0c0" stroke-width="1.6"/><path d="M3.500 4l3 2.500-3 2.500M7.500 9h3" fill="none" stroke="#eee" stroke-width="1.2"/><path d="M12.500 9l4-2.500 4 5-4 3z" fill="#e6302b"/><path d="M6 14l6-3.500 3.500 5.500-5 4z" fill="#2c6fe0"/><path d="M15.500 13l5-3.500 3.500 6-5 5.500z" fill="#58c322"/><path d="M10 20l4.500-4.500 5 4.500-4 4z" fill="#e6302b"/>`, running: true },
  { art: svg`<path d="M1 1h22v11l-10.500 11H1z" fill="#ffd60a"/><path d="M12.500 12H23L12.500 23z" fill="#3b3a38"/><path d="M23 12L12.500 23V15.500z" fill="#5a5240"/>`, running: true },
  { art: svg`<rect x="3" y="2" width="18" height="22" rx="1" fill="#4db9de"/><path d="M3 21h18v2H3z" fill="#e6eef2"/><path d="M3 22.500h18V24H3z" fill="#b4601e"/><path d="M4.500 0v3M7.500 0v3M10.500 0v3M13.500 0v3M16.500 0v3M19.500 0v3" stroke="#1d6f93" stroke-width="1.5"/><path d="M6 7.500h12M6 11.500h12M6 15.500h12" stroke="#12607f" stroke-width="1.7"/>`, running: true },
];

@customElement("task-bar")
export class TaskBar extends LitElement {
  static styles = [baseStyles, css`
    :host { display: flex; height: 72px; border-top: 2px solid #4b4a49; background: #2b2a29; color: #fff; font-family: "Open Sans", "Noto Sans", sans-serif; font-size: 18px; }
    .weather { width: 408px; padding: 8px 0 0 28px; }
    .badge-text { font: 16px "Open Sans", sans-serif; }
    .profile { font: 500 9px Roboto, sans-serif; }
    .apps { display: flex; width: 1095px; }
    .app { position: relative; display: flex; flex-direction: column; align-items: center; width: 48px; padding-top: 22px; }
    .dot { position: relative; width: 6px; height: 6px; margin-top: 11px; border-radius: 3px; background: #9d9d9c; }
    .app > svg { position: relative; }
    .active > svg, .active .dot { z-index: 1; }
    .active .dot { width: 16px; height: 5px; background: #4cc2ff; }
    .active::before, .active::after { content: ""; position: absolute; top: 4px; height: 60px; border-radius: 6px; }
    .active::before { left: 3px; width: 36px; background: #3a3938; border: 1px solid #484746; }
    .active::after { left: 3px; width: 41px; border: 1px solid #454443; border-left: 0; }
    .notice { position: absolute; left: 33px; top: 16px; width: 6px; height: 6px; border-radius: 50%; background: #4cc2ff; }
    .tray { display: flex; flex: 1; align-items: center; padding: 0 29px 2px 0; }
    .cell { display: grid; place-items: center; width: 36px; }
    .cell.expand, .cell.mic { width: 48px; color: #77d8f5; }
    .cell.expand { color: #fff; }
    .lang { width: 66px; margin-right: 6px; text-align: center; line-height: 23px; letter-spacing: -.6px; }
    .time { margin-left: auto; text-align: right; line-height: 24px; letter-spacing: -.1px; padding-bottom: 2px; }
  `];
  render() {
    return html`
      <div class="weather">${art(46, 38, "0 0 46 38", svg`<defs><linearGradient id="k" x1="0" y1="0" x2="0" y2="1"><stop stop-color="#8fb0ee"/><stop offset="1" stop-color="#e3edfb"/></linearGradient></defs><path transform="translate(-1.5 -1)" d="M9 35h22a6.500 6.500 0 0 0 4.500-11.500 7 7 0 0 0-6-5.500A9.500 9.500 0 0 0 11 18.500a8.500 8.500 0 0 0-2 16.500z" fill="url(#k)"/><circle cx="30" cy="12" r="12" fill="#c42b1c"/><text class="badge-text" x="30" y="17.5" text-anchor="middle" fill="#fff">9+</text>`)}</div>
      <div class="apps">
        ${APPS.map((a) => html`<div class=${classMap({ app: true, active: !!a.active })}>
          ${art(24, 24, "0 0 24 24", a.art)}
          ${a.running || a.active ? html`<span class="dot"></span>` : nothing}
          ${a.active ? html`<span class="notice"></span>` : nothing}</div>`)}
      </div>
      <div class="tray">
        <span class="cell expand">${line("M3.5 16l8.5-8.5 8.5 8.5", 22, 2.2)}</span>
        <span class="cell mic">${art(20, 26, "0 0 20 26", svg`<rect x="6" y="1.5" width="8" height="15" rx="4" fill="none" stroke="currentColor" stroke-width="1.8"/><path d="M2 12a8 8 0 0 0 16 0M10 20v5" fill="none" stroke="currentColor" stroke-width="1.8"/>`)}</span>
        <span class="lang">ENG<br />IN</span>
        <span class="cell">${art(26, 20, "0 0 26 20", svg`<path d="M1.500 7.500a16 16 0 0 1 23 0M5 11a11.500 11.500 0 0 1 16 0M8.700 14.300a6.500 6.500 0 0 1 8.600 0" fill="none" stroke="#fff" stroke-width="1.9"/><circle cx="13" cy="17" r="2.3" fill="#fff"/>`)}</span>
        <span class="cell">${art(26, 22, "0 0 26 22", svg`<path d="M1.500 8h3.800L11 2.500v17L5.300 14H1.500z" fill="none" stroke="#fff" stroke-width="1.5"/><path d="M14 7.500c1.500 2 1.500 5 0 7M17.500 5c2.500 3.500 2.500 8.500 0 12M21 2.500c4 5 4 12 0 17" fill="none" stroke="#fff" stroke-width="1.6"/>`)}</span>
        <span class="cell">${art(26, 24, "0 0 26 24", svg`<rect x="3" y="5.5" width="18.5" height="14.5" rx="3" fill="none" stroke="#fff" stroke-width="1.6"/><rect x="5" y="7.5" width="14.5" height="10.5" rx="1.5" fill="#fff"/><path d="M22.500 10.500h2.500v5h-2.500z" fill="#fff"/><path d="M5.500 1L1 11.500h3.500L3 17.500 9.500 8H6.500l2-7z" fill="#fff" stroke="#2b2a29" stroke-width="1"/>`)}</span>
        <span class="time">02:04<br />06-09-2025</span>
      </div>`;
  }
}

@customElement("app-root")
export class AppRoot extends LitElement {
  static styles = css`
    :host { display: block; width: 1920px; height: 1080px; overflow: hidden; background: #f9fbff; }
    .body { display: flex; height: 730px; }
  `;
  render() {
    return html`
      <browser-frame></browser-frame>
      <gmail-header></gmail-header>
      <div class="body"><gmail-sidebar></gmail-sidebar><mail-view></mail-view><side-rail></side-rail></div>
      <task-bar></task-bar>`;
  }
}
